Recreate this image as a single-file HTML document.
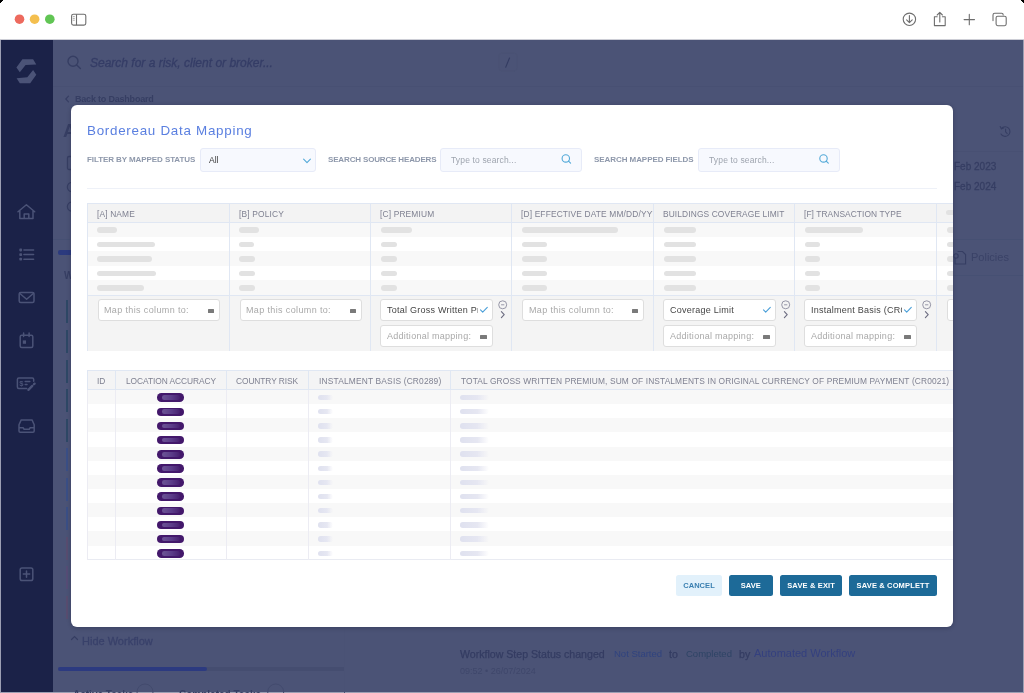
<!DOCTYPE html>
<html><head><meta charset="utf-8">
<style>
*{box-sizing:border-box;margin:0;padding:0}
html,body{width:1024px;height:693px;overflow:hidden;background:#fff;font-family:"Liberation Sans",sans-serif}
.t{position:absolute;white-space:nowrap;line-height:1;will-change:transform}
.btn{will-change:transform}
.r{position:absolute}
svg{position:absolute;overflow:visible;will-change:transform}
#modal{position:absolute;left:70.6px;top:105.3px;width:882.9px;height:521.4px;background:#fff;border-radius:6px;overflow:hidden;box-shadow:0 1px 4px rgba(15,20,45,.3)}
</style></head><body>

<div class="r" style="left:0.00px;top:0.00px;width:1024.00px;height:39.00px;background:#ffffff;"></div>
<div class="r" style="left:0.00px;top:39.00px;width:1024.00px;height:1.00px;background:#cdced6;"></div>
<div class="r" style="left:0.00px;top:40.00px;width:1024.00px;height:653.00px;background:#9c9fb3;"></div>
<svg style="left:0;top:0" width="1024" height="40">
<path d="M0 0 H3 V1 H2 V2 H1 V3 H0 Z" fill="#000"/>
<path d="M1024 0 H1021 V1 H1022 V2 H1023 V3 H1024 Z" fill="#000"/>
<circle cx="19.5" cy="19.2" r="4.8" fill="#ed6a5e"/>
<circle cx="34.6" cy="19.2" r="4.8" fill="#f4bf4f"/>
<circle cx="49.8" cy="19.2" r="4.8" fill="#61c554"/>
<g fill="none" stroke="#6e6e6e" stroke-width="1.1">
<rect x="71.6" y="14.3" width="14.2" height="10.8" rx="1.8"/>
<line x1="76.5" y1="14.3" x2="76.5" y2="25.1"/>
</g>
<g stroke="#8a8a8a" stroke-width="0.7"><line x1="72.8" y1="16.6" x2="74.8" y2="16.6"/><line x1="72.8" y1="18.4" x2="74.8" y2="18.4"/><line x1="72.8" y1="20.2" x2="74.8" y2="20.2"/></g>
<g fill="none" stroke="#6e6e6e" stroke-width="1.1" stroke-linecap="round" stroke-linejoin="round">
<circle cx="909.4" cy="19.3" r="6.2"/>
<path d="M909.4 15.6 V22.6 M906.6 19.9 L909.4 22.7 L912.2 19.9"/>
<path d="M937.2 16.7 H934.4 V25.6 H945.2 V16.7 H942.4 M939.8 22 V12.6 M937.2 15 L939.8 12.4 L942.4 15"/>
<path d="M969.3 14.4 V24.8 M964.1 19.6 H974.5"/>
<rect x="996.1" y="16.2" width="10.1" height="9.5" rx="1.6"/>
<path d="M993 20.6 V15 Q993 13.3 994.7 13.3 H1001.6 Q1003.2 13.3 1003.2 15"/>
</g>
</svg>
<div class="r" style="left:1.00px;top:40.00px;width:1022.00px;height:652.00px;background:#4b5376;"></div>
<div class="r" style="left:1.00px;top:40.00px;width:52.00px;height:652.00px;background:#1b2248;"></div>
<div class="r" style="left:53.00px;top:86.00px;width:970.00px;height:1.00px;background:#485073;"></div>
<svg style="left:0;top:0" width="60" height="693">
<g fill="#4b5377">
<path d="M22.4 59.2 H33.1 L36.3 64.4 L25.6 65 L19.8 72.2 L16.4 67.6 Z"/>
<path d="M33.1 69.9 L36.3 74.8 L30.2 83.2 H19.8 L16.6 78.3 L27.3 77.2 Z"/>
</g>
<g fill="none" stroke="#4b5377" stroke-width="1.5" stroke-linecap="round" stroke-linejoin="round">
<path d="M18 211.8 L26.4 204.7 L34.7 211.8 M19.8 210.5 V218.6 H33 V210.5 M24.2 218.6 V214 H28.8 V218.6"/>
<path d="M23.9 250 H33.6 M23.9 254.6 H33.6 M23.9 259.2 H33.6"/>
<rect x="19.2" y="292.4" width="14.8" height="10.2" rx="1.5"/>
<path d="M19.6 293.3 L26.6 299.2 L33.6 293.3"/>
<rect x="20.2" y="335.2" width="12.6" height="12.2" rx="1.5"/>
<path d="M23.6 333 V336.5 M29.1 333 V336.5"/>
<path d="M26.7 388.5 H18.8 Q17.4 388.5 17.4 387 V379.5 Q17.4 378.1 18.8 378.1 H32.3 Q33.7 378.1 33.7 379.5 V381.3"/>
<path d="M25.2 381.5 H29.8 M25.2 384.4 H27"/>
<path d="M28.4 389.9 L32.3 385.9" stroke-width="2.3"/>
<path d="M33.9 384.3 L34.6 383.6" stroke-width="2.3"/>
<path d="M21.2 419.9 H32 L34.2 424.8 V431 Q34.2 432.2 33 432.2 H20.2 Q19 432.2 19 431 V424.8 Z M19 427.8 H23.3 L24.1 429.3 H29.2 L30 427.8 H34.2"/>
<rect x="20.2" y="568" width="12.6" height="12.6" rx="1.8"/>
<path d="M26.5 570.9 V577.3 M23.3 574.1 H29.7"/>
</g>
<g fill="#4b5377"><rect x="19.3" y="248.6" width="2.8" height="2.8" rx="0.8"/><rect x="19.3" y="253.2" width="2.8" height="2.8" rx="0.8"/><rect x="19.3" y="257.8" width="2.8" height="2.8" rx="0.8"/>
<rect x="22.8" y="340.4" width="3.2" height="3.4"/></g>
<text x="19.2" y="386.4" font-family="Liberation Sans" font-weight="bold" font-size="7.6" fill="#4b5377">$</text>
</svg>
<svg style="left:0;top:0" width="1024" height="693">
<g fill="none" stroke="#363e63" stroke-width="1.2" stroke-linecap="round">
<circle cx="73" cy="61.3" r="5" stroke-width="1.4"/><path d="M76.7 65 L80.4 68.6" stroke-width="1.4"/>
<path d="M68.5 96.2 L65.8 99 L68.5 101.8"/>
<path d="M71.5 639.5 L74.5 636.5 L77.5 639.5"/>
</g>
<rect x="498.8" y="53.2" width="18.3" height="17.6" rx="3" fill="none" stroke="#4a5274" stroke-width="0.8"/>
<path d="M509.5 58 L505.7 67.2" stroke="#343c62" stroke-width="1.1" stroke-linecap="round"/>
</svg>
<div class="t" style="left:89.60px;top:56.64px;font-size:12px;color:#353d66;font-weight:normal;letter-spacing:0px;font-style:italic;-webkit-text-stroke:0.3px #353d66">Search for a risk, client or broker...</div>
<div class="t" style="left:75.00px;top:94.78px;font-size:9px;color:#363e63;font-weight:bold;letter-spacing:-0.2px;font-style:normal;">Back to Dashboard</div>
<div class="t" style="left:62.50px;top:121.73px;font-size:18.5px;color:#363e63;font-weight:bold;letter-spacing:0px;font-style:normal;">A</div>
<div class="r" style="left:58.00px;top:250.00px;width:20.00px;height:4.80px;background:#2b3a7e;border-radius:2px"></div>
<div class="t" style="left:63.50px;top:270.53px;font-size:10px;color:#363e63;font-weight:bold;letter-spacing:0px;font-style:normal;">W</div>
<div class="r" style="left:66.20px;top:300.40px;width:1.60px;height:23.00px;background:#2e4866;"></div>
<div class="r" style="left:66.20px;top:329.95px;width:1.60px;height:23.00px;background:#2e4866;"></div>
<div class="r" style="left:66.20px;top:359.50px;width:1.60px;height:23.00px;background:#2e4866;"></div>
<div class="r" style="left:66.20px;top:389.05px;width:1.60px;height:23.00px;background:#2e4866;"></div>
<div class="r" style="left:66.20px;top:418.60px;width:1.60px;height:23.00px;background:#2e4866;"></div>
<div class="r" style="left:66.20px;top:448.15px;width:1.60px;height:23.00px;background:#3a4f86;"></div>
<div class="r" style="left:66.20px;top:477.70px;width:1.60px;height:23.00px;background:#3a4f86;"></div>
<div class="r" style="left:66.20px;top:507.25px;width:1.60px;height:23.00px;background:#3a4f86;"></div>
<div class="r" style="left:66.20px;top:536.80px;width:1.60px;height:23.00px;background:#584d70;"></div>
<div class="r" style="left:66.20px;top:566.35px;width:1.60px;height:23.00px;background:#564d76;"></div>
<div class="r" style="left:66.20px;top:595.90px;width:1.60px;height:23.00px;background:#584d70;"></div>
<svg style="left:0;top:0" width="1024" height="693"><g fill="none" stroke="#363e63" stroke-width="1.3"><rect x="67.5" y="156.5" width="8" height="13" rx="1.5"/><circle cx="72" cy="187" r="4.6"/><circle cx="72" cy="206.6" r="4.6"/></g></svg>
<div class="r" style="left:53.00px;top:239.00px;width:17.00px;height:1.00px;background:#465073;"></div>
<div class="t" style="left:82.30px;top:635.68px;font-size:11px;color:#39416a;font-weight:normal;letter-spacing:0px;font-style:normal;-webkit-text-stroke:0.3px #39416a">Hide Workflow</div>
<div class="r" style="left:58.00px;top:667.00px;width:286.50px;height:4.30px;background:#454d70;border-radius:2px"></div>
<div class="r" style="left:58.00px;top:667.00px;width:149.00px;height:4.30px;background:#2c3a80;border-radius:2px"></div>
<div class="r" style="left:343.50px;top:627.00px;width:1.00px;height:66.00px;background:#4a5275;"></div>
<div class="t" style="left:73.00px;top:689.53px;font-size:10px;color:#363e63;font-weight:bold;letter-spacing:0px;font-style:normal;">Active Tasks</div>
<div class="t" style="left:179.00px;top:689.53px;font-size:10px;color:#363e63;font-weight:bold;letter-spacing:0px;font-style:normal;">Completed Tasks</div>
<svg style="left:0;top:0" width="1024" height="693"><g fill="none" stroke="#434b6e" stroke-width="1"><circle cx="145" cy="692" r="8"/><circle cx="275.7" cy="692" r="8"/></g></svg>
<div class="t" style="left:459.90px;top:648.52px;font-size:10.6px;color:#343c62;font-weight:normal;letter-spacing:0px;font-style:normal;-webkit-text-stroke:0.25px #343c62">Workflow Step Status changed</div>
<div class="t" style="left:613.70px;top:649.25px;font-size:9.5px;color:#30437f;font-weight:normal;letter-spacing:0px;font-style:normal;">Not Started</div>
<div class="t" style="left:668.60px;top:648.52px;font-size:10.6px;color:#343c62;font-weight:normal;letter-spacing:0px;font-style:normal;-webkit-text-stroke:0.25px #343c62">to</div>
<div class="t" style="left:685.70px;top:649.25px;font-size:9.5px;color:#2e4465;font-weight:normal;letter-spacing:0px;font-style:normal;">Completed</div>
<div class="t" style="left:738.70px;top:648.52px;font-size:10.6px;color:#343c62;font-weight:normal;letter-spacing:0px;font-style:normal;-webkit-text-stroke:0.25px #343c62">by</div>
<div class="t" style="left:753.90px;top:648.18px;font-size:11px;color:#34407f;font-weight:normal;letter-spacing:0px;font-style:normal;">Automated Workflow</div>
<div class="t" style="left:459.90px;top:667.38px;font-size:9px;color:#3f476b;font-weight:normal;letter-spacing:0px;font-style:normal;">09:52 &bull; 26/07/2024</div>
<svg style="left:0;top:0" width="1024" height="693">

<g fill="none" stroke="#363e63" stroke-width="1.1" stroke-linecap="round">
<path d="M1001.4 128.6 A4.8 4.8 0 1 1 1001 134"/>
<path d="M1000.2 126.6 L1001.4 128.8 L1003.6 128"/>
<path d="M1005.6 129 V131.8 L1007.2 133.6"/>
<path d="M958 251.5 H962.5 L965.6 254.6 V264 H955 V258"/>
<circle cx="956" cy="256" r="2.2"/>
</g>
</svg>
<div class="t" style="left:954.00px;top:161.83px;font-size:10px;color:#363e63;font-weight:normal;letter-spacing:0px;font-style:normal;-webkit-text-stroke:0.3px #363e63">Feb 2023</div>
<div class="t" style="left:954.00px;top:181.53px;font-size:10px;color:#363e63;font-weight:normal;letter-spacing:0px;font-style:normal;-webkit-text-stroke:0.3px #363e63">Feb 2024</div>
<div class="r" style="left:953.00px;top:151.00px;width:70.00px;height:1.00px;background:#485073;"></div>
<div class="r" style="left:953.00px;top:239.00px;width:70.00px;height:1.00px;background:#465073;"></div>
<div class="r" style="left:953.00px;top:275.00px;width:70.00px;height:1.00px;background:#465073;"></div>
<div class="t" style="left:971.30px;top:252.38px;font-size:11px;color:#3a4267;font-weight:normal;letter-spacing:0px;font-style:normal;">Policies</div>
<div id="modal">
<div class="t" style="left:16.00px;top:18.65px;font-size:13.4px;color:#5a7fe0;font-weight:normal;letter-spacing:0.72px;font-style:normal;">Bordereau Data Mapping</div>
<div class="t" style="left:16.40px;top:50.72px;font-size:8px;color:#8e98ab;font-weight:bold;letter-spacing:-0.08px;font-style:normal;">FILTER BY MAPPED STATUS</div>
<div class="t" style="left:257.10px;top:50.72px;font-size:8px;color:#8e98ab;font-weight:bold;letter-spacing:-0.15px;font-style:normal;">SEARCH SOURCE HEADERS</div>
<div class="t" style="left:523.10px;top:50.72px;font-size:8px;color:#8e98ab;font-weight:bold;letter-spacing:-0.065px;font-style:normal;">SEARCH MAPPED FIELDS</div>
<div class="r" style="left:129.60px;top:42.90px;width:116.00px;height:23.70px;background:#f7f9fe;border:1px solid #e7ebf8;border-radius:3px"></div>
<div class="t" style="left:138.80px;top:51.00px;font-size:8.5px;color:#3a3a3a;font-weight:normal;letter-spacing:0px;font-style:normal;">All</div>
<div class="r" style="left:369.70px;top:42.90px;width:141.70px;height:23.70px;background:#f7f9fe;border:1px solid #e7ebf8;border-radius:3px"></div>
<div class="r" style="left:627.60px;top:42.90px;width:141.70px;height:23.70px;background:#f7f9fe;border:1px solid #e7ebf8;border-radius:3px"></div>
<div class="t" style="left:380.10px;top:50.80px;font-size:8.5px;color:#9ea4ae;font-weight:normal;letter-spacing:0.15px;font-style:normal;">Type to search...</div>
<div class="t" style="left:638.00px;top:50.80px;font-size:8.5px;color:#9ea4ae;font-weight:normal;letter-spacing:0.15px;font-style:normal;">Type to search...</div>
<svg style="left:0;top:0" width="884" height="522">
<g fill="none" stroke="#52a9d8" stroke-width="1.1" stroke-linecap="round" stroke-linejoin="round">
<path d="M232.6 54.2 L236 57.6 L239.4 54.2"/>
<circle cx="494.8" cy="53.4" r="3.7"/><path d="M497.5 56.1 L499.6 58.2"/>
<circle cx="752.5" cy="53.4" r="3.7"/><path d="M755.2 56.1 L757.3 58.2"/>
</g></svg>
<div class="r" style="left:16.40px;top:82.90px;width:850.00px;height:1.00px;background:#eef1f8;"></div>
<div class="r" style="left:16.40px;top:97.90px;width:880.00px;height:147.80px;background:#ffffff;"></div>
<div class="r" style="left:16.40px;top:97.90px;width:880.00px;height:19.20px;background:#f3f3f3;"></div>
<div class="r" style="left:16.40px;top:117.10px;width:880.00px;height:14.50px;background:#f8f8f8;"></div>
<div class="r" style="left:16.40px;top:131.60px;width:880.00px;height:14.50px;background:#ffffff;"></div>
<div class="r" style="left:16.40px;top:146.10px;width:880.00px;height:14.50px;background:#f8f8f8;"></div>
<div class="r" style="left:16.40px;top:160.60px;width:880.00px;height:14.30px;background:#ffffff;"></div>
<div class="r" style="left:16.40px;top:174.90px;width:880.00px;height:14.40px;background:#f8f8f8;"></div>
<div class="r" style="left:16.40px;top:189.30px;width:880.00px;height:56.40px;background:#f4f4f4;"></div>
<div class="r" style="left:16.40px;top:97.90px;width:880.00px;height:1.00px;background:#e0e7f3;"></div>
<div class="r" style="left:16.40px;top:117.10px;width:880.00px;height:1.00px;background:#e0e7f3;"></div>
<div class="r" style="left:16.40px;top:189.30px;width:880.00px;height:1.00px;background:#e0e7f3;"></div>
<div class="r" style="left:16.40px;top:97.90px;width:1.00px;height:147.80px;background:#e0e7f3;"></div>
<div class="r" style="left:158.40px;top:97.90px;width:1.00px;height:147.80px;background:#e0e7f3;"></div>
<div class="r" style="left:299.90px;top:97.90px;width:1.00px;height:147.80px;background:#e0e7f3;"></div>
<div class="r" style="left:440.90px;top:97.90px;width:1.00px;height:147.80px;background:#e0e7f3;"></div>
<div class="r" style="left:582.90px;top:97.90px;width:1.00px;height:147.80px;background:#e0e7f3;"></div>
<div class="r" style="left:723.90px;top:97.90px;width:1.00px;height:147.80px;background:#e0e7f3;"></div>
<div class="r" style="left:865.70px;top:97.90px;width:1.00px;height:147.80px;background:#e0e7f3;"></div>
<div class="r" style="left:17.40px;top:97.90px;width:140.50px;height:20px;overflow:hidden"><div class="t" style="left:8.60px;top:6.89px;font-size:8.4px;color:#7f8191;font-weight:normal;letter-spacing:0.15px;font-style:normal;">[A] NAME</div></div>
<div class="r" style="left:159.40px;top:97.90px;width:140.00px;height:20px;overflow:hidden"><div class="t" style="left:8.60px;top:6.89px;font-size:8.4px;color:#7f8191;font-weight:normal;letter-spacing:0.17px;font-style:normal;">[B] POLICY</div></div>
<div class="r" style="left:300.90px;top:97.90px;width:139.50px;height:20px;overflow:hidden"><div class="t" style="left:8.60px;top:6.89px;font-size:8.4px;color:#7f8191;font-weight:normal;letter-spacing:0.16px;font-style:normal;">[C] PREMIUM</div></div>
<div class="r" style="left:441.90px;top:97.90px;width:140.50px;height:20px;overflow:hidden"><div class="t" style="left:8.60px;top:6.89px;font-size:8.4px;color:#7f8191;font-weight:normal;letter-spacing:0.15px;font-style:normal;">[D] EFFECTIVE DATE MM/DD/YYYY</div></div>
<div class="r" style="left:583.90px;top:97.90px;width:139.50px;height:20px;overflow:hidden"><div class="t" style="left:8.60px;top:6.89px;font-size:8.4px;color:#7f8191;font-weight:normal;letter-spacing:0.12px;font-style:normal;">BUILDINGS COVERAGE LIMIT</div></div>
<div class="r" style="left:724.90px;top:97.90px;width:140.30px;height:20px;overflow:hidden"><div class="t" style="left:8.60px;top:6.89px;font-size:8.4px;color:#7f8191;font-weight:normal;letter-spacing:0.08px;font-style:normal;">[F] TRANSACTION TYPE</div></div>
<div class="r" style="left:26.80px;top:122.10px;width:20.00px;height:5.50px;background:#e2e2e2;border-radius:3px"></div>
<div class="r" style="left:26.80px;top:136.60px;width:58.00px;height:5.50px;background:#e2e2e2;border-radius:3px"></div>
<div class="r" style="left:26.80px;top:151.10px;width:55.00px;height:5.50px;background:#e2e2e2;border-radius:3px"></div>
<div class="r" style="left:26.80px;top:165.50px;width:59.00px;height:5.50px;background:#e2e2e2;border-radius:3px"></div>
<div class="r" style="left:26.80px;top:179.85px;width:47.00px;height:5.50px;background:#e2e2e2;border-radius:3px"></div>
<div class="r" style="left:168.80px;top:122.10px;width:20.00px;height:5.50px;background:#e2e2e2;border-radius:3px"></div>
<div class="r" style="left:168.80px;top:136.60px;width:14.50px;height:5.50px;background:#e2e2e2;border-radius:3px"></div>
<div class="r" style="left:168.80px;top:151.10px;width:16.00px;height:5.50px;background:#e2e2e2;border-radius:3px"></div>
<div class="r" style="left:168.80px;top:165.50px;width:16.00px;height:5.50px;background:#e2e2e2;border-radius:3px"></div>
<div class="r" style="left:168.80px;top:179.85px;width:16.00px;height:5.50px;background:#e2e2e2;border-radius:3px"></div>
<div class="r" style="left:310.30px;top:122.10px;width:31.00px;height:5.50px;background:#e2e2e2;border-radius:3px"></div>
<div class="r" style="left:310.30px;top:136.60px;width:16.40px;height:5.50px;background:#e2e2e2;border-radius:3px"></div>
<div class="r" style="left:310.30px;top:151.10px;width:16.40px;height:5.50px;background:#e2e2e2;border-radius:3px"></div>
<div class="r" style="left:310.30px;top:165.50px;width:16.40px;height:5.50px;background:#e2e2e2;border-radius:3px"></div>
<div class="r" style="left:310.30px;top:179.85px;width:16.40px;height:5.50px;background:#e2e2e2;border-radius:3px"></div>
<div class="r" style="left:451.30px;top:122.10px;width:95.70px;height:5.50px;background:#e2e2e2;border-radius:3px"></div>
<div class="r" style="left:451.30px;top:136.60px;width:24.70px;height:5.50px;background:#e2e2e2;border-radius:3px"></div>
<div class="r" style="left:451.30px;top:151.10px;width:24.70px;height:5.50px;background:#e2e2e2;border-radius:3px"></div>
<div class="r" style="left:451.30px;top:165.50px;width:24.70px;height:5.50px;background:#e2e2e2;border-radius:3px"></div>
<div class="r" style="left:451.30px;top:179.85px;width:24.70px;height:5.50px;background:#e2e2e2;border-radius:3px"></div>
<div class="r" style="left:593.30px;top:122.10px;width:32.50px;height:5.50px;background:#e2e2e2;border-radius:3px"></div>
<div class="r" style="left:593.30px;top:136.60px;width:32.50px;height:5.50px;background:#e2e2e2;border-radius:3px"></div>
<div class="r" style="left:593.30px;top:151.10px;width:32.50px;height:5.50px;background:#e2e2e2;border-radius:3px"></div>
<div class="r" style="left:593.30px;top:165.50px;width:32.50px;height:5.50px;background:#e2e2e2;border-radius:3px"></div>
<div class="r" style="left:593.30px;top:179.85px;width:32.50px;height:5.50px;background:#e2e2e2;border-radius:3px"></div>
<div class="r" style="left:734.30px;top:122.10px;width:58.40px;height:5.50px;background:#e2e2e2;border-radius:3px"></div>
<div class="r" style="left:734.30px;top:136.60px;width:15.50px;height:5.50px;background:#e2e2e2;border-radius:3px"></div>
<div class="r" style="left:734.30px;top:151.10px;width:15.50px;height:5.50px;background:#e2e2e2;border-radius:3px"></div>
<div class="r" style="left:734.30px;top:165.50px;width:15.50px;height:5.50px;background:#e2e2e2;border-radius:3px"></div>
<div class="r" style="left:734.30px;top:179.85px;width:15.50px;height:5.50px;background:#e2e2e2;border-radius:3px"></div>
<div class="r" style="left:876.10px;top:122.10px;width:20.00px;height:5.50px;background:#e2e2e2;border-radius:3px"></div>
<div class="r" style="left:876.10px;top:136.60px;width:20.00px;height:5.50px;background:#e2e2e2;border-radius:3px"></div>
<div class="r" style="left:876.10px;top:151.10px;width:20.00px;height:5.50px;background:#e2e2e2;border-radius:3px"></div>
<div class="r" style="left:876.10px;top:165.50px;width:20.00px;height:5.50px;background:#e2e2e2;border-radius:3px"></div>
<div class="r" style="left:876.10px;top:179.85px;width:20.00px;height:5.50px;background:#e2e2e2;border-radius:3px"></div>
<div class="r" style="left:875.20px;top:104.70px;width:20.00px;height:5.50px;background:#e2e2e2;border-radius:3px"></div>
<div class="r" style="left:27.20px;top:193.90px;width:121.80px;height:21.60px;background:#fff;border:1px solid #dedede;border-radius:3px"></div>
<div class="t" style="left:33.70px;top:200.38px;font-size:9px;color:#a9a9a9;font-weight:normal;letter-spacing:0.366px;font-style:normal;">Map this column to:</div>
<div class="r" style="left:137.10px;top:203.40px;width:6.00px;height:4.00px;background:#7a7a7a;border-radius:0.5px"></div>
<div class="r" style="left:169.20px;top:193.90px;width:121.80px;height:21.60px;background:#fff;border:1px solid #dedede;border-radius:3px"></div>
<div class="t" style="left:175.70px;top:200.38px;font-size:9px;color:#a9a9a9;font-weight:normal;letter-spacing:0.366px;font-style:normal;">Map this column to:</div>
<div class="r" style="left:279.10px;top:203.40px;width:6.00px;height:4.00px;background:#7a7a7a;border-radius:0.5px"></div>
<div class="r" style="left:309.70px;top:193.90px;width:112.40px;height:21.60px;background:#fff;border:1px solid #dedede;border-radius:3px;overflow:hidden"></div>
<div class="r" style="left:316.20px;top:194.30px;width:91.6px;height:20px;overflow:hidden"><div class="t" style="left:0.00px;top:6.88px;font-size:9px;color:#454545;font-weight:normal;letter-spacing:0.25px;font-style:normal;">Total Gross Written Premium</div></div>
<div class="r" style="left:309.70px;top:220.10px;width:112.40px;height:21.40px;background:#fff;border:1px solid #dedede;border-radius:3px"></div>
<div class="t" style="left:316.20px;top:227.18px;font-size:9px;color:#a9a9a9;font-weight:normal;letter-spacing:0.27px;font-style:normal;">Additional mapping:</div>
<div class="r" style="left:409.90px;top:229.50px;width:6.20px;height:4.10px;background:#7a7a7a;border-radius:0.5px"></div>
<div class="r" style="left:451.70px;top:193.90px;width:121.80px;height:21.60px;background:#fff;border:1px solid #dedede;border-radius:3px"></div>
<div class="t" style="left:458.20px;top:200.38px;font-size:9px;color:#a9a9a9;font-weight:normal;letter-spacing:0.366px;font-style:normal;">Map this column to:</div>
<div class="r" style="left:561.60px;top:203.40px;width:6.00px;height:4.00px;background:#7a7a7a;border-radius:0.5px"></div>
<div class="r" style="left:592.70px;top:193.90px;width:112.40px;height:21.60px;background:#fff;border:1px solid #dedede;border-radius:3px;overflow:hidden"></div>
<div class="r" style="left:599.20px;top:194.30px;width:91.6px;height:20px;overflow:hidden"><div class="t" style="left:0.00px;top:6.88px;font-size:9px;color:#454545;font-weight:normal;letter-spacing:0.25px;font-style:normal;">Coverage Limit</div></div>
<div class="r" style="left:592.70px;top:220.10px;width:112.40px;height:21.40px;background:#fff;border:1px solid #dedede;border-radius:3px"></div>
<div class="t" style="left:599.20px;top:227.18px;font-size:9px;color:#a9a9a9;font-weight:normal;letter-spacing:0.27px;font-style:normal;">Additional mapping:</div>
<div class="r" style="left:692.90px;top:229.50px;width:6.20px;height:4.10px;background:#7a7a7a;border-radius:0.5px"></div>
<div class="r" style="left:733.70px;top:193.90px;width:112.40px;height:21.60px;background:#fff;border:1px solid #dedede;border-radius:3px;overflow:hidden"></div>
<div class="r" style="left:740.20px;top:194.30px;width:91.6px;height:20px;overflow:hidden"><div class="t" style="left:0.00px;top:6.88px;font-size:9px;color:#454545;font-weight:normal;letter-spacing:0.25px;font-style:normal;">Instalment Basis (CR0021)</div></div>
<div class="r" style="left:733.70px;top:220.10px;width:112.40px;height:21.40px;background:#fff;border:1px solid #dedede;border-radius:3px"></div>
<div class="t" style="left:740.20px;top:227.18px;font-size:9px;color:#a9a9a9;font-weight:normal;letter-spacing:0.27px;font-style:normal;">Additional mapping:</div>
<div class="r" style="left:833.90px;top:229.50px;width:6.20px;height:4.10px;background:#7a7a7a;border-radius:0.5px"></div>
<div class="r" style="left:876.50px;top:193.90px;width:121.80px;height:21.60px;background:#fff;border:1px solid #dedede;border-radius:3px"></div>
<div class="t" style="left:883.00px;top:200.38px;font-size:9px;color:#a9a9a9;font-weight:normal;letter-spacing:0.366px;font-style:normal;">Map this column to:</div>
<div class="r" style="left:986.40px;top:203.40px;width:6.00px;height:4.00px;background:#7a7a7a;border-radius:0.5px"></div>
<svg style="left:0;top:0" width="884" height="522"><path d="M409.50 204.90 L411.70 207.10 L416.30 202.30" fill="none" stroke="#4a9fd8" stroke-width="1.1" stroke-linecap="round" stroke-linejoin="round"/><circle cx="431.70" cy="199.80" r="4.0" fill="none" stroke="#85859a" stroke-width="0.85"/><path d="M430.10 199.80 H433.30" stroke="#85859a" stroke-width="0.85"/><path d="M430.40 206.70 L433.20 209.70 L430.40 212.70" fill="none" stroke="#6e6e82" stroke-width="1.15" stroke-linecap="round" stroke-linejoin="round"/><path d="M692.50 204.90 L694.70 207.10 L699.30 202.30" fill="none" stroke="#4a9fd8" stroke-width="1.1" stroke-linecap="round" stroke-linejoin="round"/><circle cx="714.70" cy="199.80" r="4.0" fill="none" stroke="#85859a" stroke-width="0.85"/><path d="M713.10 199.80 H716.30" stroke="#85859a" stroke-width="0.85"/><path d="M713.40 206.70 L716.20 209.70 L713.40 212.70" fill="none" stroke="#6e6e82" stroke-width="1.15" stroke-linecap="round" stroke-linejoin="round"/><path d="M833.50 204.90 L835.70 207.10 L840.30 202.30" fill="none" stroke="#4a9fd8" stroke-width="1.1" stroke-linecap="round" stroke-linejoin="round"/><circle cx="855.70" cy="199.80" r="4.0" fill="none" stroke="#85859a" stroke-width="0.85"/><path d="M854.10 199.80 H857.30" stroke="#85859a" stroke-width="0.85"/><path d="M854.40 206.70 L857.20 209.70 L854.40 212.70" fill="none" stroke="#6e6e82" stroke-width="1.15" stroke-linecap="round" stroke-linejoin="round"/></svg>
<div class="r" style="left:16.40px;top:265.20px;width:880.00px;height:19.50px;background:#f4f4f5;"></div>
<div class="r" style="left:16.40px;top:284.70px;width:880.00px;height:14.15px;background:#f8f8f8;"></div>
<div class="r" style="left:16.40px;top:298.85px;width:880.00px;height:14.15px;background:#ffffff;"></div>
<div class="r" style="left:16.40px;top:313.00px;width:880.00px;height:14.15px;background:#f8f8f8;"></div>
<div class="r" style="left:16.40px;top:327.15px;width:880.00px;height:14.15px;background:#ffffff;"></div>
<div class="r" style="left:16.40px;top:341.30px;width:880.00px;height:14.15px;background:#f8f8f8;"></div>
<div class="r" style="left:16.40px;top:355.45px;width:880.00px;height:14.15px;background:#ffffff;"></div>
<div class="r" style="left:16.40px;top:369.60px;width:880.00px;height:14.15px;background:#f8f8f8;"></div>
<div class="r" style="left:16.40px;top:383.75px;width:880.00px;height:14.15px;background:#ffffff;"></div>
<div class="r" style="left:16.40px;top:397.90px;width:880.00px;height:14.15px;background:#f8f8f8;"></div>
<div class="r" style="left:16.40px;top:412.05px;width:880.00px;height:14.15px;background:#ffffff;"></div>
<div class="r" style="left:16.40px;top:426.20px;width:880.00px;height:14.15px;background:#f8f8f8;"></div>
<div class="r" style="left:16.40px;top:440.35px;width:880.00px;height:14.15px;background:#ffffff;"></div>
<div class="r" style="left:16.40px;top:265.20px;width:880.00px;height:1.00px;background:#e0e7f3;"></div>
<div class="r" style="left:16.40px;top:284.20px;width:880.00px;height:1.00px;background:#e0e7f3;"></div>
<div class="r" style="left:16.40px;top:454.00px;width:880.00px;height:1.00px;background:#e9ebf2;"></div>
<div class="r" style="left:16.40px;top:265.20px;width:1.00px;height:19.50px;background:#e0e7f3;"></div>
<div class="r" style="left:16.40px;top:284.70px;width:1.00px;height:169.80px;background:#ececf3;"></div>
<div class="r" style="left:44.80px;top:265.20px;width:1.00px;height:19.50px;background:#e0e7f3;"></div>
<div class="r" style="left:44.80px;top:284.70px;width:1.00px;height:169.80px;background:#ececf3;"></div>
<div class="r" style="left:155.20px;top:265.20px;width:1.00px;height:19.50px;background:#e0e7f3;"></div>
<div class="r" style="left:155.20px;top:284.70px;width:1.00px;height:169.80px;background:#ececf3;"></div>
<div class="r" style="left:237.70px;top:265.20px;width:1.00px;height:19.50px;background:#e0e7f3;"></div>
<div class="r" style="left:237.70px;top:284.70px;width:1.00px;height:169.80px;background:#ececf3;"></div>
<div class="r" style="left:379.90px;top:265.20px;width:1.00px;height:19.50px;background:#e0e7f3;"></div>
<div class="r" style="left:379.90px;top:284.70px;width:1.00px;height:169.80px;background:#ececf3;"></div>
<div class="t" style="left:26.90px;top:271.59px;font-size:8.4px;color:#7f8191;font-weight:normal;letter-spacing:0.0px;font-style:normal;">ID</div>
<div class="t" style="left:55.10px;top:271.59px;font-size:8.4px;color:#7f8191;font-weight:normal;letter-spacing:-0.06px;font-style:normal;">LOCATION ACCURACY</div>
<div class="t" style="left:165.40px;top:271.59px;font-size:8.4px;color:#7f8191;font-weight:normal;letter-spacing:-0.08px;font-style:normal;">COUNTRY RISK</div>
<div class="t" style="left:248.00px;top:271.59px;font-size:8.4px;color:#7f8191;font-weight:normal;letter-spacing:0.18px;font-style:normal;">INSTALMENT BASIS (CR0289)</div>
<div class="t" style="left:390.10px;top:271.59px;font-size:8.4px;color:#7f8191;font-weight:normal;letter-spacing:0.12px;font-style:normal;">TOTAL GROSS WRITTEN PREMIUM, SUM OF INSTALMENTS IN ORIGINAL CURRENCY OF PREMIUM PAYMENT (CR0021)</div>
<div class="r" style="left:86.70px;top:288.07px;width:26.60px;height:8.60px;background:#43186b;border-radius:4.3px"></div>
<div class="r" style="left:91.60px;top:289.97px;width:17.40px;height:4.70px;background:linear-gradient(90deg,#6c5495,#5a3b88 55%,#47206f);border-radius:2.3px;filter:blur(0.5px)"></div>
<div class="r" style="left:247.50px;top:289.57px;width:15.40px;height:5.40px;background:linear-gradient(90deg,#dfe1ef,#e6e7f2 60%,rgba(240,240,246,0));border-radius:2.7px;filter:blur(0.4px)"></div>
<div class="r" style="left:389.70px;top:289.57px;width:28.40px;height:5.40px;background:linear-gradient(90deg,#dfe1ef,#e6e7f2 60%,rgba(240,240,246,0));border-radius:2.7px;filter:blur(0.4px)"></div>
<div class="r" style="left:86.70px;top:302.22px;width:26.60px;height:8.60px;background:#43186b;border-radius:4.3px"></div>
<div class="r" style="left:91.60px;top:304.12px;width:17.40px;height:4.70px;background:linear-gradient(90deg,#6c5495,#5a3b88 55%,#47206f);border-radius:2.3px;filter:blur(0.5px)"></div>
<div class="r" style="left:247.50px;top:303.72px;width:15.40px;height:5.40px;background:linear-gradient(90deg,#dfe1ef,#e6e7f2 60%,rgba(240,240,246,0));border-radius:2.7px;filter:blur(0.4px)"></div>
<div class="r" style="left:389.70px;top:303.72px;width:28.40px;height:5.40px;background:linear-gradient(90deg,#dfe1ef,#e6e7f2 60%,rgba(240,240,246,0));border-radius:2.7px;filter:blur(0.4px)"></div>
<div class="r" style="left:86.70px;top:316.38px;width:26.60px;height:8.60px;background:#43186b;border-radius:4.3px"></div>
<div class="r" style="left:91.60px;top:318.27px;width:17.40px;height:4.70px;background:linear-gradient(90deg,#6c5495,#5a3b88 55%,#47206f);border-radius:2.3px;filter:blur(0.5px)"></div>
<div class="r" style="left:247.50px;top:317.88px;width:15.40px;height:5.40px;background:linear-gradient(90deg,#dfe1ef,#e6e7f2 60%,rgba(240,240,246,0));border-radius:2.7px;filter:blur(0.4px)"></div>
<div class="r" style="left:389.70px;top:317.88px;width:28.40px;height:5.40px;background:linear-gradient(90deg,#dfe1ef,#e6e7f2 60%,rgba(240,240,246,0));border-radius:2.7px;filter:blur(0.4px)"></div>
<div class="r" style="left:86.70px;top:330.52px;width:26.60px;height:8.60px;background:#43186b;border-radius:4.3px"></div>
<div class="r" style="left:91.60px;top:332.42px;width:17.40px;height:4.70px;background:linear-gradient(90deg,#6c5495,#5a3b88 55%,#47206f);border-radius:2.3px;filter:blur(0.5px)"></div>
<div class="r" style="left:247.50px;top:332.02px;width:15.40px;height:5.40px;background:linear-gradient(90deg,#dfe1ef,#e6e7f2 60%,rgba(240,240,246,0));border-radius:2.7px;filter:blur(0.4px)"></div>
<div class="r" style="left:389.70px;top:332.02px;width:28.40px;height:5.40px;background:linear-gradient(90deg,#dfe1ef,#e6e7f2 60%,rgba(240,240,246,0));border-radius:2.7px;filter:blur(0.4px)"></div>
<div class="r" style="left:86.70px;top:344.68px;width:26.60px;height:8.60px;background:#43186b;border-radius:4.3px"></div>
<div class="r" style="left:91.60px;top:346.57px;width:17.40px;height:4.70px;background:linear-gradient(90deg,#6c5495,#5a3b88 55%,#47206f);border-radius:2.3px;filter:blur(0.5px)"></div>
<div class="r" style="left:247.50px;top:346.18px;width:15.40px;height:5.40px;background:linear-gradient(90deg,#dfe1ef,#e6e7f2 60%,rgba(240,240,246,0));border-radius:2.7px;filter:blur(0.4px)"></div>
<div class="r" style="left:389.70px;top:346.18px;width:28.40px;height:5.40px;background:linear-gradient(90deg,#dfe1ef,#e6e7f2 60%,rgba(240,240,246,0));border-radius:2.7px;filter:blur(0.4px)"></div>
<div class="r" style="left:86.70px;top:358.82px;width:26.60px;height:8.60px;background:#43186b;border-radius:4.3px"></div>
<div class="r" style="left:91.60px;top:360.72px;width:17.40px;height:4.70px;background:linear-gradient(90deg,#6c5495,#5a3b88 55%,#47206f);border-radius:2.3px;filter:blur(0.5px)"></div>
<div class="r" style="left:247.50px;top:360.32px;width:15.40px;height:5.40px;background:linear-gradient(90deg,#dfe1ef,#e6e7f2 60%,rgba(240,240,246,0));border-radius:2.7px;filter:blur(0.4px)"></div>
<div class="r" style="left:389.70px;top:360.32px;width:28.40px;height:5.40px;background:linear-gradient(90deg,#dfe1ef,#e6e7f2 60%,rgba(240,240,246,0));border-radius:2.7px;filter:blur(0.4px)"></div>
<div class="r" style="left:86.70px;top:372.97px;width:26.60px;height:8.60px;background:#43186b;border-radius:4.3px"></div>
<div class="r" style="left:91.60px;top:374.87px;width:17.40px;height:4.70px;background:linear-gradient(90deg,#6c5495,#5a3b88 55%,#47206f);border-radius:2.3px;filter:blur(0.5px)"></div>
<div class="r" style="left:247.50px;top:374.47px;width:15.40px;height:5.40px;background:linear-gradient(90deg,#dfe1ef,#e6e7f2 60%,rgba(240,240,246,0));border-radius:2.7px;filter:blur(0.4px)"></div>
<div class="r" style="left:389.70px;top:374.47px;width:28.40px;height:5.40px;background:linear-gradient(90deg,#dfe1ef,#e6e7f2 60%,rgba(240,240,246,0));border-radius:2.7px;filter:blur(0.4px)"></div>
<div class="r" style="left:86.70px;top:387.12px;width:26.60px;height:8.60px;background:#43186b;border-radius:4.3px"></div>
<div class="r" style="left:91.60px;top:389.02px;width:17.40px;height:4.70px;background:linear-gradient(90deg,#6c5495,#5a3b88 55%,#47206f);border-radius:2.3px;filter:blur(0.5px)"></div>
<div class="r" style="left:247.50px;top:388.62px;width:15.40px;height:5.40px;background:linear-gradient(90deg,#dfe1ef,#e6e7f2 60%,rgba(240,240,246,0));border-radius:2.7px;filter:blur(0.4px)"></div>
<div class="r" style="left:389.70px;top:388.62px;width:28.40px;height:5.40px;background:linear-gradient(90deg,#dfe1ef,#e6e7f2 60%,rgba(240,240,246,0));border-radius:2.7px;filter:blur(0.4px)"></div>
<div class="r" style="left:86.70px;top:401.27px;width:26.60px;height:8.60px;background:#43186b;border-radius:4.3px"></div>
<div class="r" style="left:91.60px;top:403.17px;width:17.40px;height:4.70px;background:linear-gradient(90deg,#6c5495,#5a3b88 55%,#47206f);border-radius:2.3px;filter:blur(0.5px)"></div>
<div class="r" style="left:247.50px;top:402.77px;width:15.40px;height:5.40px;background:linear-gradient(90deg,#dfe1ef,#e6e7f2 60%,rgba(240,240,246,0));border-radius:2.7px;filter:blur(0.4px)"></div>
<div class="r" style="left:389.70px;top:402.77px;width:28.40px;height:5.40px;background:linear-gradient(90deg,#dfe1ef,#e6e7f2 60%,rgba(240,240,246,0));border-radius:2.7px;filter:blur(0.4px)"></div>
<div class="r" style="left:86.70px;top:415.43px;width:26.60px;height:8.60px;background:#43186b;border-radius:4.3px"></div>
<div class="r" style="left:91.60px;top:417.33px;width:17.40px;height:4.70px;background:linear-gradient(90deg,#6c5495,#5a3b88 55%,#47206f);border-radius:2.3px;filter:blur(0.5px)"></div>
<div class="r" style="left:247.50px;top:416.93px;width:15.40px;height:5.40px;background:linear-gradient(90deg,#dfe1ef,#e6e7f2 60%,rgba(240,240,246,0));border-radius:2.7px;filter:blur(0.4px)"></div>
<div class="r" style="left:389.70px;top:416.93px;width:28.40px;height:5.40px;background:linear-gradient(90deg,#dfe1ef,#e6e7f2 60%,rgba(240,240,246,0));border-radius:2.7px;filter:blur(0.4px)"></div>
<div class="r" style="left:86.70px;top:429.57px;width:26.60px;height:8.60px;background:#43186b;border-radius:4.3px"></div>
<div class="r" style="left:91.60px;top:431.48px;width:17.40px;height:4.70px;background:linear-gradient(90deg,#6c5495,#5a3b88 55%,#47206f);border-radius:2.3px;filter:blur(0.5px)"></div>
<div class="r" style="left:247.50px;top:431.07px;width:15.40px;height:5.40px;background:linear-gradient(90deg,#dfe1ef,#e6e7f2 60%,rgba(240,240,246,0));border-radius:2.7px;filter:blur(0.4px)"></div>
<div class="r" style="left:389.70px;top:431.07px;width:28.40px;height:5.40px;background:linear-gradient(90deg,#dfe1ef,#e6e7f2 60%,rgba(240,240,246,0));border-radius:2.7px;filter:blur(0.4px)"></div>
<div class="r" style="left:86.70px;top:443.72px;width:26.60px;height:8.60px;background:#43186b;border-radius:4.3px"></div>
<div class="r" style="left:91.60px;top:445.63px;width:17.40px;height:4.70px;background:linear-gradient(90deg,#6c5495,#5a3b88 55%,#47206f);border-radius:2.3px;filter:blur(0.5px)"></div>
<div class="r" style="left:247.50px;top:445.22px;width:15.40px;height:5.40px;background:linear-gradient(90deg,#dfe1ef,#e6e7f2 60%,rgba(240,240,246,0));border-radius:2.7px;filter:blur(0.4px)"></div>
<div class="r" style="left:389.70px;top:445.22px;width:28.40px;height:5.40px;background:linear-gradient(90deg,#dfe1ef,#e6e7f2 60%,rgba(240,240,246,0));border-radius:2.7px;filter:blur(0.4px)"></div>
<div class="r btn" style="left:605.40px;top:469.30px;width:46.00px;height:21.4px;background:#e2f1fb;border-radius:2.5px;color:#3a7fb0;font-weight:bold;font-size:7.5px;letter-spacing:0.05px;line-height:21.4px;text-align:center;white-space:nowrap">CANCEL</div>
<div class="r btn" style="left:658.20px;top:469.30px;width:43.70px;height:21.4px;background:#1d6a98;border-radius:2.5px;color:#ffffff;font-weight:bold;font-size:7.5px;letter-spacing:0.05px;line-height:21.4px;text-align:center;white-space:nowrap">SAVE</div>
<div class="r btn" style="left:709.40px;top:469.30px;width:62.30px;height:21.4px;background:#1d6a98;border-radius:2.5px;color:#ffffff;font-weight:bold;font-size:7.5px;letter-spacing:0.16px;line-height:21.4px;text-align:center;white-space:nowrap">SAVE &amp; EXIT</div>
<div class="r btn" style="left:778.50px;top:469.30px;width:88.10px;height:21.4px;background:#1d6a98;border-radius:2.5px;color:#ffffff;font-weight:bold;font-size:7.5px;letter-spacing:0.15px;line-height:21.4px;text-align:center;white-space:nowrap">SAVE &amp; COMPLETT</div>
</div>
</body></html>
